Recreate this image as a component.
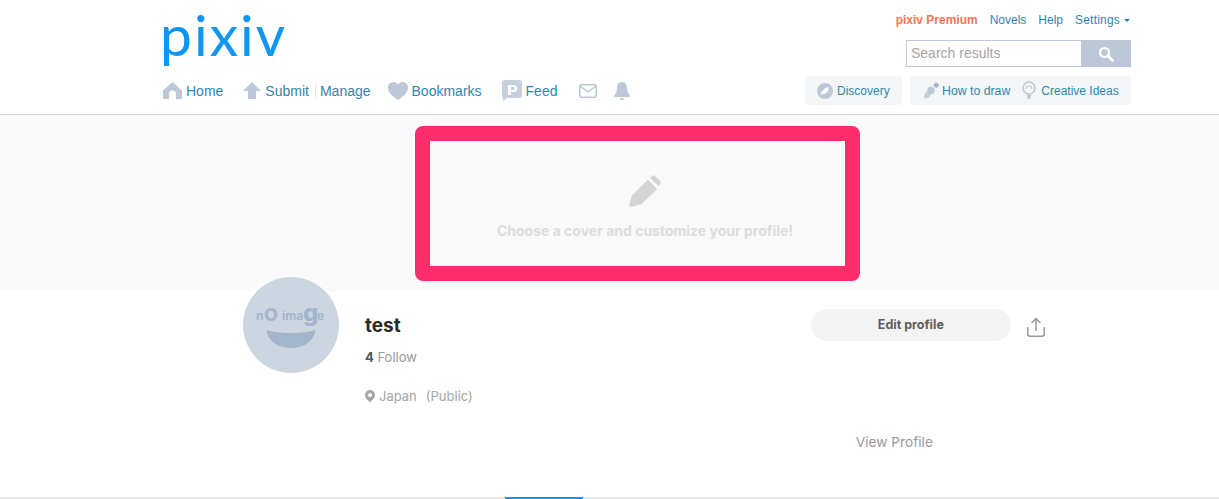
<script>
</script>

<div class="page">
  <header>
    <div class="head-inner">
      <div class="top">
        <div class="logo">pixiv</div>
        <div class="top-right">
          <div class="links">
            <span class="premium">pixiv Premium</span>
            <span>Novels</span>
            <span>Help</span>
            <span class="settings">Settings<i class="caret"></i></span>
          </div>
          <div class="search">
            <div class="field">Search results</div>
            <div class="search-btn">
              <svg width="16" height="16" viewBox="0 0 16 16">
                <circle cx="6.500" cy="6.500" r="4.500" fill="none" stroke="#fff" stroke-width="2.200" />
                <path d="M10 10l4.500 4.500" stroke="#fff" stroke-width="2.800" stroke-linecap="round" />
              </svg>
            </div>
          </div>
        </div>
      </div>
      <nav>
        <div class="nav-left">
          <div class="item home">
            <svg width="19" height="17" viewBox="0 0 19 17">
              <path fill="#bcc8d8" d="M9.500 0L19 8.500V17h-6v-5a3.500 3.500 0 0 0-7 0v5H0V8.500z" />
            </svg>
            <span>Home</span>
          </div>
          <div class="item submit">
            <svg width="18" height="17" viewBox="0 0 18 17">
              <path fill="#bcc8d8" d="M9 0l9 9h-5v8H5V9H0z" />
            </svg>
            <span>Submit</span>
          </div>
          <span class="sep"></span>
          <div class="item manage"><span>Manage</span></div>
          <div class="item heart">
            <svg width="20" height="18" viewBox="0 0 20 18">
              <path fill="#bcc8d8" d="M10 18C4 14 0 10.500 0 5.500A5.300 5.300 0 0 1 5.500 0C7.500 0 9 1 10 2.500 11 1 12.500 0 14.500 0A5.300 5.300 0 0 1 20 5.500C20 10.500 16 14 10 18z" />
            </svg>
            <span>Bookmarks</span>
          </div>
          <div class="item feed">
            <svg width="20" height="21" viewBox="0 0 20 21">
              <path fill="#c6d0dd" d="M2.500 0h15A2.500 2.500 0 0 1 20 2.500v13a2.500 2.500 0 0 1-2.500 2.500H5l-4 3v-3.200A2.500 2.500 0 0 1 0 15.500v-13A2.500 2.500 0 0 1 2.500 0z" />
              <path fill="#fff" d="M6 5h5.500a3.500 3.500 0 0 1 0 7H9v3H6zM9 7v3h2.200a1.500 1.500 0 0 0 0-3z" />
            </svg>
            <span>Feed</span>
          </div>
          <svg class="mail" width="18" height="14" viewBox="0 0 18 14">
            <rect x="0.750" y="0.750" width="16.500" height="12.500" rx="1.500" fill="none" stroke="#bcc8d8" stroke-width="1.500" />
            <path d="M1 2l8 6 8-6" fill="none" stroke="#bcc8d8" stroke-width="1.500" />
          </svg>
          <svg class="bell" width="16" height="18" viewBox="0 0 16 18">
            <path fill="#bcc8d8" d="M8 0c3.500 0 5 3 5 6 0 3 1 5 3 8v1H0v-1c2-3 3-5 3-8 0-3 1.500-6 5-6z" />
            <path fill="#bcc8d8" d="M6 16h4a2 2 0 0 1-4 0z" />
          </svg>
        </div>
        <div class="nav-right">
          <div class="pill discovery">
            <svg width="16" height="16" viewBox="0 0 16 16">
              <circle cx="8" cy="8" r="8" fill="#bcc8d8" />
              <path d="M4 12c0-4 3-7 8-8-1 5-3 7-6 7z" fill="#fff" />
            </svg>
            <span>Discovery</span>
          </div>
          <div class="pill tools">
            <svg width="17" height="17" viewBox="0 0 17 17">
              <path d="M1 16.500c0-2.500.3-4.500 1.500-6l2-1.500 3.500 4-1.500 2c-1.500 1-3.500 1.500-5.500 1.500z" fill="#c6d0dd" />
              <circle cx="8" cy="8.500" r="3.700" fill="#bcc8d8" />
              <rect x="11" y="1" width="4.500" height="4.500" rx="1" fill="#a9b7c9" transform="rotate(40 13.250 3.250)" />
            </svg>
            <span class="draw">How to draw</span>
            <svg class="bulb" width="14" height="19" viewBox="0 0 14 19">
              <circle cx="7" cy="7" r="6" fill="none" stroke="#bcc8d8" stroke-width="1.500" />
              <path d="M4 8a3 3 0 0 1 6 0" fill="none" stroke="#bcc8d8" stroke-width="1.200" />
              <path d="M4.500 13.500h5L8 18H6z" fill="#bcc8d8" />
            </svg>
            <span>Creative Ideas</span>
          </div>
        </div>
      </nav>
    </div>
  </header>

  <section class="cover">
    <svg width="32" height="32" viewBox="0 0 34 34">
      <path fill="#d4d4d4" d="M0 32.500L3 22 20 5l10 10L13 31 2.500 34z" />
      <path fill="#d4d4d4" d="M22.500 3l2-2a2.200 2.200 0 0 1 3 0l5.500 5.500a2.200 2.200 0 0 1 0 3L31.500 12z" />
    </svg>
    <p>Choose a cover and customize your profile!</p>
  </section>

  <section class="profile">
    <div class="avatar">
      <svg width="96" height="96" viewBox="0 0 96 96">
        <circle cx="48" cy="48" r="48" fill="#ccd6e0" />
        <g fill="#a2b5ca" font-family="Inter, sans-serif" font-weight="700">
          <text x="13" y="43" font-size="12">n</text>
          <text x="21" y="44" font-size="18" font-weight="800">O</text>
          <text x="39" y="43" font-size="12">ima</text>
          <text x="60" y="44" font-size="24" font-weight="800">g</text>
          <text x="74" y="43" font-size="12">e</text>
        </g>
        <path fill="#a2b5ca" d="M24.500 53c8 4 39 4 47 0 1 0 1 1 .5 3-3 9-12 15-24 15s-21-6-24-15c-.5-2 0-3 .5-3z" />
      </svg>
    </div>
    <div class="info">
      <h1>test</h1>
      <div class="follow"><b>4</b> Follow</div>
      <div class="location">
        <svg width="10" height="12" viewBox="0 0 10 12">
          <path fill-rule="evenodd" fill="#a5a5a5" d="M5 0a5 5 0 0 1 5 5c0 3-3 5.500-5 7-2-1.500-5-4-5-7a5 5 0 0 1 5-5zm0 3a2 2 0 1 0 0 4 2 2 0 0 0 0-4z" />
        </svg>
        <span>Japan</span><span class="public">(Public)</span>
      </div>
    </div>
    <div class="actions">
      <div class="action-row">
        <div class="edit">Edit profile</div>
        <svg class="share" width="18" height="20" viewBox="0 0 18 20">
          <path d="M.750 10v6.750a2.500 2.500 0 0 0 2.500 2.500h11.500a2.500 2.500 0 0 0 2.500-2.500V10" fill="none" stroke="#9a9a9a" stroke-width="1.500" />
          <path d="M9 14V1.500M4.500 6L9 1.500 13.500 6" fill="none" stroke="#9a9a9a" stroke-width="1.500" />
        </svg>
      </div>
      <div class="view">View Profile</div>
    </div>
  </section>

  <div class="tabs"><span class="active"></span></div>

  <div class="highlight"></div>
</div>

<style>
  :global(body) {
    margin: 0;
    background: #fff;
  }
  .page {
    position: relative;
    width: 1219px;
    height: 499px;
    overflow: hidden;
    font-family: "Liberation Sans", Arial, sans-serif;
  }
  header {
    height: 114px;
    border-bottom: 1px solid #d6d6d6;
  }
  .head-inner {
    width: 971px;
    margin-left: 160px;
  }
  .top {
    display: flex;
    justify-content: space-between;
    height: 76px;
  }
  .logo {
    font-family: "Lato", sans-serif;
    font-weight: 400;
    font-size: 57px;
    line-height: 68px;
    letter-spacing: 2px;
    color: #0f96f5;
  }
  .top-right {
    width: 300px;
    display: flex;
    flex-direction: column;
    align-items: flex-end;
  }
  .links {
    display: flex;
    gap: 12px;
    height: 40px;
    align-items: center;
    font-size: 12px;
    color: #2f86ad;
    white-space: nowrap;
  }
  .premium {
    color: #f4774f;
    font-weight: 700;
  }
  .settings {
    letter-spacing: 0.200px;
  }
  .caret {
    display: inline-block;
    margin: 0 1px 0 4px;
    border: 3px solid transparent;
    border-top: 3px solid #2f86ad;
    border-bottom: 0;
    vertical-align: 2px;
  }
  .search {
    display: flex;
    width: 225px;
    height: 27px;
  }
  .field {
    flex: 1;
    border: 1px solid #bcc8d8;
    border-right: 0;
    font-size: 14px;
    line-height: 25px;
    padding-left: 4px;
    color: #a5a5a5;
  }
  .search-btn {
    width: 50px;
    background: #bcc8d8;
    display: flex;
    align-items: center;
    justify-content: center;
  }
  nav {
    display: flex;
    justify-content: space-between;
    height: 29px;
  }
  .nav-left {
    display: flex;
    align-items: center;
    padding-left: 3px;
    font-size: 14px;
    color: #2f86ad;
  }
  .item {
    display: flex;
    align-items: center;
    gap: 4px;
  }
  .submit {
    margin-left: 20px;
  }
  .sep {
    width: 1px;
    height: 14px;
    background: #e3e8ee;
    margin: 0 3px 0 6px;
  }
  .manage {
    margin-left: 1px;
  }
  .heart {
    margin-left: 17px;
  }
  .feed {
    margin-left: 20px;
  }
  .mail {
    margin-left: 22px;
  }
  .bell {
    margin-left: 17px;
  }
  .nav-right {
    display: flex;
    gap: 8px;
    font-size: 12px;
    color: #2f86ad;
  }
  .pill {
    display: flex;
    align-items: center;
    background: #f4f6f8;
    border-radius: 4px;
    height: 29px;
  }
  .discovery {
    width: 97px;
    padding-left: 12px;
    box-sizing: border-box;
    gap: 4px;
  }
  .tools {
    width: 221px;
    padding-left: 13px;
    box-sizing: border-box;
  }
  .draw {
    margin-left: 2px;
    font-size: 12.300px;
  }
  .bulb {
    margin: 0 5px 0 12px;
  }
  .cover {
    height: 176px;
    background: #fafafa;
    display: flex;
    flex-direction: column;
    align-items: center;
    box-sizing: border-box;
    padding-top: 60px;
    padding-left: 71px;
  }
  .cover p {
    margin: 15px 0 0;
    font-family: "Inter", sans-serif;
    font-weight: 700;
    font-size: 14px;
    line-height: 18px;
    color: #dcdcdc;
  }
  .profile {
    display: flex;
    padding-left: 243px;
    height: 206px;
    font-family: "Inter", sans-serif;
  }
  .avatar {
    width: 96px;
    height: 96px;
    margin-top: -14px;
  }
  .info {
    margin-left: 26px;
    padding-top: 24px;
  }
  h1 {
    margin: 0;
    font-size: 19px;
    line-height: 22px;
    font-weight: 700;
    color: #2c2c2c;
  }
  .follow {
    margin-top: 11px;
    font-size: 13px;
    line-height: 18px;
    color: #999;
  }
  .follow b {
    color: #555;
  }
  .location {
    display: flex;
    align-items: center;
    margin-top: 21px;
    gap: 4px;
    font-size: 13px;
    line-height: 18px;
    color: #a5a5a5;
  }
  .public {
    margin-left: 5px;
  }
  .actions {
    margin-left: 338px;
    padding-top: 18px;
  }
  .action-row {
    display: flex;
    align-items: center;
    gap: 16px;
  }
  .share {
    margin-top: 3px;
  }
  .edit {
    width: 200px;
    height: 32px;
    border-radius: 16px;
    background: #f4f4f4;
    text-align: center;
    font-size: 12.500px;
    font-weight: 700;
    line-height: 32px;
    color: #5c5c5c;
  }
  .view {
    margin: 92px 0 0 45px;
    font-size: 13.700px;
    line-height: 18px;
    color: #999;
  }
  .tabs {
    position: absolute;
    left: 0;
    right: 0;
    top: 497px;
    height: 2px;
    background: #e8e8e8;
  }
  .active {
    display: block;
    width: 78px;
    height: 2px;
    margin-left: 505px;
    background: #0f96f0;
  }
  .highlight {
    position: absolute;
    left: 415px;
    top: 126px;
    width: 445px;
    height: 155px;
    box-sizing: border-box;
    border: 15px solid #ff2d6b;
    border-radius: 8px;
  }
</style>
